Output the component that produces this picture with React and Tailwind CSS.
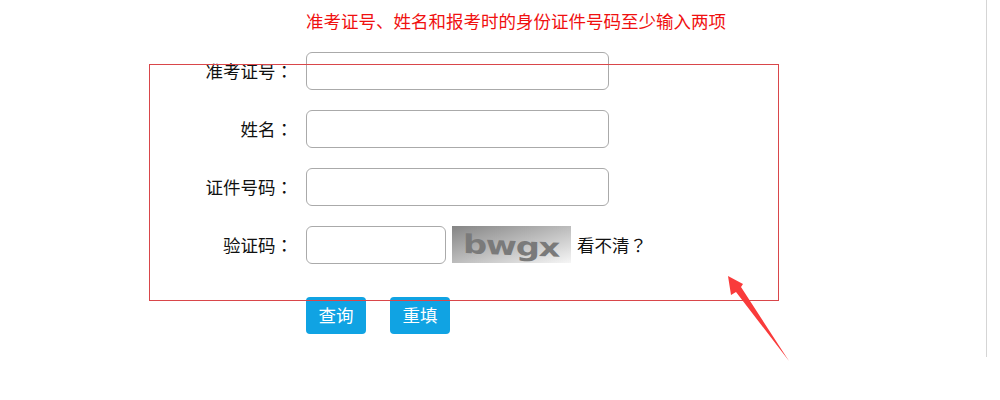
import React from 'react';

const fontStack = 'font-["Noto_Sans_CJK_SC","Liberation_Sans",sans-serif]';
const punctFont = 'font-["Noto_Sans_CJK_TC","Liberation_Sans",sans-serif]';

const FormRow = ({ label, children }) => (
    <div className="flex items-center h-[38px]">
        <label className="w-[143px] text-right text-[17.5px] text-[#111] whitespace-nowrap">
            {label}<span className={punctFont}>：</span>
        </label>
        <div className="ml-[13px] flex items-center">{children}</div>
    </div>
);

const TextBox = ({ className }) => (
    <input type="text" className={`h-[38px] bg-white border border-[#aaa] rounded-[6px] ${className}`} />
);

const App = () => {
    return (
        <div className={`relative w-[1000px] h-[400px] bg-white overflow-hidden ${fontStack}`}>
            <div className="w-[987px] h-[357px] border-r border-[#d5d5d5] pl-[150px]">
                {/* Notice */}
                <p className="pl-[156px] pt-[8px] h-[52px] text-[17.5px] leading-[26px] text-[#f01010] whitespace-nowrap">
                    准考证号、姓名和报考时的身份证件号码至少输入两项
                </p>

                {/* Form */}
                <div className="flex flex-col gap-[20px]">
                    <FormRow label="准考证号">
                        <TextBox className="w-[303px]" />
                    </FormRow>
                    <FormRow label="姓名">
                        <TextBox className="w-[303px]" />
                    </FormRow>
                    <FormRow label="证件号码">
                        <TextBox className="w-[303px]" />
                    </FormRow>
                    <FormRow label="验证码">
                        <TextBox className="w-[140px]" />
                        <div className="ml-[6px] -mt-[1px] w-[119px] h-[37px] bg-gradient-to-br from-[#858585] to-[#f6f6f6] flex items-center justify-center">
                            <span className='font-["DejaVu_Sans",sans-serif] font-bold text-[26px] leading-none tracking-[-1px] text-[#7a7a7a] skew-y-3 scale-x-130 mt-[3px]'>
                                bwgx
                            </span>
                        </div>
                        <span className="ml-[6px] text-[17.5px] text-[#111] whitespace-nowrap">
                            看不清<span className={punctFont}>？</span>
                        </span>
                    </FormRow>
                </div>

                {/* Buttons */}
                <div className="flex gap-[24px] mt-[33px] ml-[156px]">
                    <button className="w-[60px] h-[37px] rounded-[4px] bg-[#10a3e3] text-white text-[17.5px]">查询</button>
                    <button className="w-[60px] h-[37px] rounded-[4px] bg-[#10a3e3] text-white text-[17.5px]">重填</button>
                </div>
            </div>

            {/* Annotation drawn over the page */}
            <div className="absolute left-[149px] top-[64px] w-[630px] h-[237px] border border-[#d9464a] pointer-events-none" />
            <svg className="absolute left-0 top-0 pointer-events-none" width="1000" height="400">
                <polygon points="728,276 743,284 741,287 789,361 736,292 731,295" fill="#f93b3b" />
            </svg>
        </div>
    );
};

export default App;
